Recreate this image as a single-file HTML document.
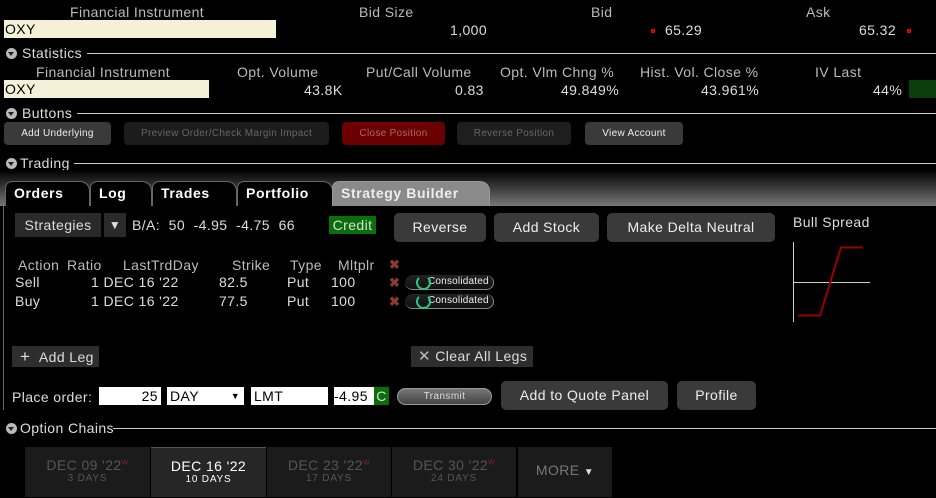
<!DOCTYPE html>
<html><head><meta charset="utf-8"><style>
*{margin:0;padding:0;box-sizing:border-box}
body{width:936px;height:498px;background:#000;color:#ddd;font-family:"Liberation Sans",sans-serif;font-size:14px;letter-spacing:0.4px;position:relative;overflow:hidden}
.a{position:absolute;white-space:nowrap}
.h{color:#bbb}
.line{position:absolute;height:1px;background:#ccc;right:0}
.tri{position:absolute;width:11px;height:11px;border-radius:50%;background:#bbb}
.tri:after{content:"";position:absolute;left:2px;top:4px;border-left:3.5px solid transparent;border-right:3.5px solid transparent;border-top:4px solid #222}
.btn{position:absolute;border-radius:4px;font-size:10px;text-align:center;line-height:23px;letter-spacing:0.3px}
.b2{position:absolute;background:#3a3a3a;border-radius:5px;color:#eee;text-align:center;font-size:14px}
.tab{position:absolute;top:181px;height:25px;background:#000;border:1px solid #666;border-bottom:none;border-radius:7px 10px 0 0;color:#fff;font-weight:bold;font-size:14px;padding:3px 0 0 8px;letter-spacing:0.6px}
.dt{position:absolute;top:447px;height:50px;background:#1b1b1b;text-align:center;color:#555}
.dt b{display:block;font-weight:normal;font-size:14px;margin-top:10px}
.dt i{display:block;font-style:normal;font-size:10px;letter-spacing:.8px}
.dt sup{color:#822;font-size:7px}
.in{position:absolute;background:#fff;color:#000;height:18px;top:387px;font-size:14px;line-height:18px;padding:0 3px}
.x{position:absolute;color:#8a3a32;font-weight:bold;font-size:13px}
.cons{position:absolute;left:405px;width:89px;height:15px;border-radius:8px;background:linear-gradient(#222,#111);border-bottom:1px solid #888;border-right:1px solid #888;font-size:10px;color:#eee;padding-left:23px;line-height:14px;letter-spacing:0.2px}
.cons:before{content:"";position:absolute;left:11px;top:0;width:11px;height:11px;border:2px solid #2c8;border-radius:50%;border-top-color:transparent}
</style></head><body>
<div class="a h" style="left:70px;top:4px">Financial Instrument</div>
<div class="a h" style="left:359px;top:4px">Bid Size</div>
<div class="a h" style="left:591px;top:4px">Bid</div>
<div class="a h" style="left:806px;top:4px">Ask</div>
<div class="a" style="left:4px;top:20px;width:272px;height:18px;background:#f3f2d8;color:#000;padding-left:1px;line-height:19px">OXY</div>
<div class="a" style="left:450px;top:22px">1,000</div>
<div class="a" style="left:651px;top:29px;width:4px;height:4px;background:#d00"></div>
<div class="a" style="left:665px;top:22px">65.29</div>
<div class="a" style="left:859px;top:22px">65.32</div>
<div class="a" style="left:907px;top:29px;width:4px;height:4px;background:#d00"></div>

<div class="tri" style="left:6px;top:48px"></div><div class="a" style="left:22px;top:45px">Statistics</div><div class="line" style="left:87px;top:53px"></div>
<div class="a h" style="left:36px;top:64px">Financial Instrument</div>
<div class="a h" style="left:237px;top:64px">Opt. Volume</div>
<div class="a h" style="left:366px;top:64px">Put/Call Volume</div>
<div class="a h" style="left:500px;top:64px">Opt. Vlm Chng %</div>
<div class="a h" style="left:640px;top:64px">Hist. Vol. Close %</div>
<div class="a h" style="left:815px;top:64px">IV Last</div>
<div class="a" style="left:4px;top:80px;width:205px;height:18px;background:#f3f2d8;color:#000;padding-left:1px;line-height:19px">OXY</div>
<div class="a" style="left:304px;top:82px">43.8K</div>
<div class="a" style="left:455px;top:82px">0.83</div>
<div class="a" style="left:561px;top:82px">49.849%</div>
<div class="a" style="left:701px;top:82px">43.961%</div>
<div class="a" style="left:873px;top:82px">44%</div>
<div class="a" style="left:909px;top:80px;width:27px;height:18px;background:#0c3d0c"></div>

<div class="tri" style="left:6px;top:108px"></div><div class="a" style="left:22px;top:105px">Buttons</div><div class="line" style="left:77px;top:113px"></div>
<div class="btn" style="left:4px;top:122px;width:107px;background:#3a3a3a;color:#eee">Add Underlying</div>
<div class="btn" style="left:124px;top:122px;width:205px;background:#1c1c1c;color:#666">Preview Order/Check Margin Impact</div>
<div class="btn" style="left:342px;top:122px;width:103px;background:#6a0000;color:#a66">Close Position</div>
<div class="btn" style="left:457px;top:122px;width:114px;background:#1e1e1e;color:#666">Reverse Position</div>
<div class="btn" style="left:585px;top:122px;width:98px;background:#3a3a3a;color:#eee">View Account</div>

<div class="tri" style="left:6px;top:158px"></div><div class="a" style="left:20px;top:155px">Trading</div><div class="line" style="left:74px;top:163px"></div>
<div class="a" style="left:0;top:170px;width:936px;height:36px;background:linear-gradient(#000,#777)"></div>
<div class="tab" style="left:5px;width:85px">Orders</div>
<div class="tab" style="left:90px;width:62px">Log</div>
<div class="tab" style="left:152px;width:85px">Trades</div>
<div class="tab" style="left:237px;width:96px">Portfolio</div>
<div class="tab" style="left:332px;width:158px;background:#8a8a8a;border-color:#999;color:#eee">Strategy Builder</div>
<div class="a" style="left:3px;top:206px;width:1px;height:204px;background:#666"></div>

<div class="a" style="left:15px;top:213px;width:86px;height:24px;background:#2a2a2a;line-height:24px;text-align:center">Strategies</div>
<div class="a" style="left:104px;top:213px;width:22px;height:24px;background:#2a2a2a;line-height:24px;text-align:center;font-size:12px">▼</div>
<div class="a" style="left:132px;top:217px">B/A:&nbsp;&nbsp;50&nbsp;&nbsp;-4.95&nbsp;&nbsp;-4.75&nbsp;&nbsp;66</div>
<div class="a" style="left:329px;top:216px;width:47px;height:18px;background:#0a6e0a;line-height:18px;text-align:center">Credit</div>
<div class="b2" style="left:394px;top:213px;width:92px;height:29px;line-height:29px">Reverse</div>
<div class="b2" style="left:494px;top:213px;width:105px;height:29px;line-height:29px">Add Stock</div>
<div class="b2" style="left:607px;top:213px;width:168px;height:29px;line-height:29px">Make Delta Neutral</div>
<div class="a" style="left:793px;top:214px">Bull Spread</div>
<svg class="a" style="left:790px;top:240px" width="90" height="85"><line x1="3.5" y1="2" x2="3.5" y2="82" stroke="#ccc"/><line x1="3" y1="42.5" x2="80" y2="42.5" stroke="#ccc"/><polyline points="8,75.5 30,75.5 51,7.5 73,7.5" fill="none" stroke="#900" stroke-width="2"/></svg>

<div class="a h" style="left:18px;top:257px">Action</div>
<div class="a h" style="left:67px;top:257px">Ratio</div>
<div class="a h" style="left:123px;top:257px">LastTrdDay</div>
<div class="a h" style="left:232px;top:257px">Strike</div>
<div class="a h" style="left:290px;top:257px">Type</div>
<div class="a h" style="left:338px;top:257px">Mltplr</div>
<div class="x" style="left:389px;top:257px">✖</div>
<div class="a" style="left:15px;top:274px">Sell</div><div class="a" style="left:91px;top:274px">1 DEC 16 '22</div><div class="a" style="left:219px;top:274px">82.5</div><div class="a" style="left:287px;top:274px">Put</div><div class="a" style="left:331px;top:274px">100</div>
<div class="x" style="left:389px;top:275px">✖</div><div class="cons" style="top:275px">Consolidated</div>
<div class="a" style="left:15px;top:293px">Buy</div><div class="a" style="left:91px;top:293px">1 DEC 16 '22</div><div class="a" style="left:219px;top:293px">77.5</div><div class="a" style="left:287px;top:293px">Put</div><div class="a" style="left:331px;top:293px">100</div>
<div class="x" style="left:389px;top:294px">✖</div><div class="cons" style="top:294px">Consolidated</div>

<div class="a" style="left:12px;top:346px;width:87px;height:21px;background:#2e2e2e;line-height:21px;padding-left:8px"><span style="font-size:17px">+</span>&nbsp;&nbsp;Add Leg</div>
<div class="a" style="left:411px;top:346px;width:122px;height:21px;background:#2e2e2e;line-height:21px;padding-left:7px"><span style="font-size:15px;color:#bbb">✕</span>&nbsp;Clear All Legs</div>

<div class="a" style="left:12px;top:389px">Place order:</div>
<div class="in" style="left:99px;width:62px;text-align:right">25</div>
<div class="in" style="left:167px;width:77px">DAY<span style="position:absolute;right:4px;font-size:9px">▼</span></div>
<div class="in" style="left:251px;width:77px">LMT</div>
<div class="in" style="left:334px;width:40px;padding:0">-4.95</div>
<div class="a" style="left:374px;top:387px;width:15px;height:18px;background:#0a6e0a;text-align:center;line-height:18px">C</div>
<div class="a" style="left:397px;top:388px;width:95px;height:17px;border-radius:9px;background:linear-gradient(#777,#444);border:1px solid #999;font-size:10px;text-align:center;line-height:15px;color:#ddd">Transmit</div>
<div class="b2" style="left:501px;top:381px;width:167px;height:29px;line-height:29px">Add to Quote Panel</div>
<div class="b2" style="left:677px;top:381px;width:79px;height:29px;line-height:29px">Profile</div>

<div class="tri" style="left:6px;top:423px"></div><div class="a" style="left:20px;top:420px">Option Chains</div><div class="line" style="left:113px;top:428px"></div>
<div class="dt" style="left:25px;width:125px"><b>DEC 09 '22<sup>W</sup></b><i>3 DAYS</i></div>
<div class="dt" style="left:151px;width:115px;background:#262626;border-top:1px solid #555;color:#fff"><b>DEC 16 '22</b><i>10 DAYS</i></div>
<div class="dt" style="left:267px;width:124px"><b>DEC 23 '22<sup>W</sup></b><i>17 DAYS</i></div>
<div class="dt" style="left:392px;width:124px"><b>DEC 30 '22<sup>W</sup></b><i>24 DAYS</i></div>
<div class="dt" style="left:518px;width:94px;color:#777"><b style="margin-top:15px">MORE <span style="color:#ddd;font-size:10px">▼</span></b></div>
</body></html>
